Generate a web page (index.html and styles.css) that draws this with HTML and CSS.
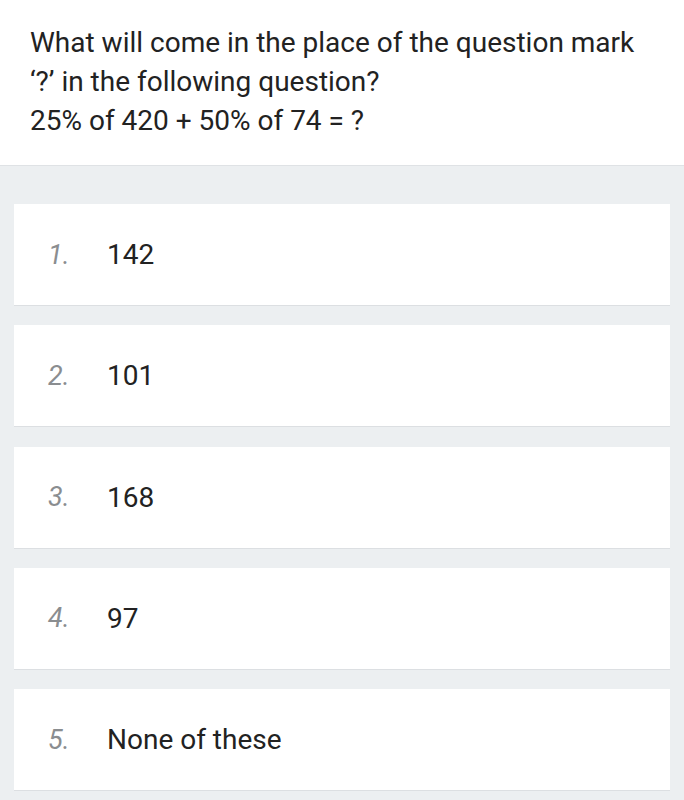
FILE: index.html
```html
<!DOCTYPE html>
<html>
<head>
<meta charset="utf-8">
<link rel="stylesheet" href="styles.css">
</head>
<body>
<div class="question">
  <p>What will come in the place of the question mark ‘?’ in the following question?<br>25% of 420 + 50% of 74 = ?</p>
</div>
<div class="options">
  <div class="option"><span class="num">1.</span><span class="val">142</span></div>
  <div class="option"><span class="num">2.</span><span class="val">101</span></div>
  <div class="option"><span class="num">3.</span><span class="val">168</span></div>
  <div class="option"><span class="num">4.</span><span class="val">97</span></div>
  <div class="option"><span class="num">5.</span><span class="val">None of these</span></div>
</div>
</body>
</html>
```
FILE: styles.css
```css
html, body {
  margin: 0;
  padding: 0;
  background: #eceff1;
  font-family: Roboto, "Liberation Sans", sans-serif;
}
.question {
  background: #fff;
  border-bottom: 1px solid #dfe2e5;
  padding: 23px 30px 0 30px;
  height: 142px;
  box-sizing: content-box;
}
.question p {
  margin: 0;
  font-size: 28px;
  line-height: 39px;
  color: #222;
}
.options {
  display: flex;
  flex-direction: column;
  gap: 19.25px;
  padding: 38px 14px 0 14px;
}
.option {
  background: #fff;
  height: 101px;
  border-bottom: 1px solid #dcdfe2;
  display: flex;
  align-items: center;
  padding-left: 34px;
}
.num {
  width: 59px;
  font-size: 27px;
  color: #8a8d90;
  font-style: italic;
}
.val {
  font-size: 28px;
  color: #222;
}
```
